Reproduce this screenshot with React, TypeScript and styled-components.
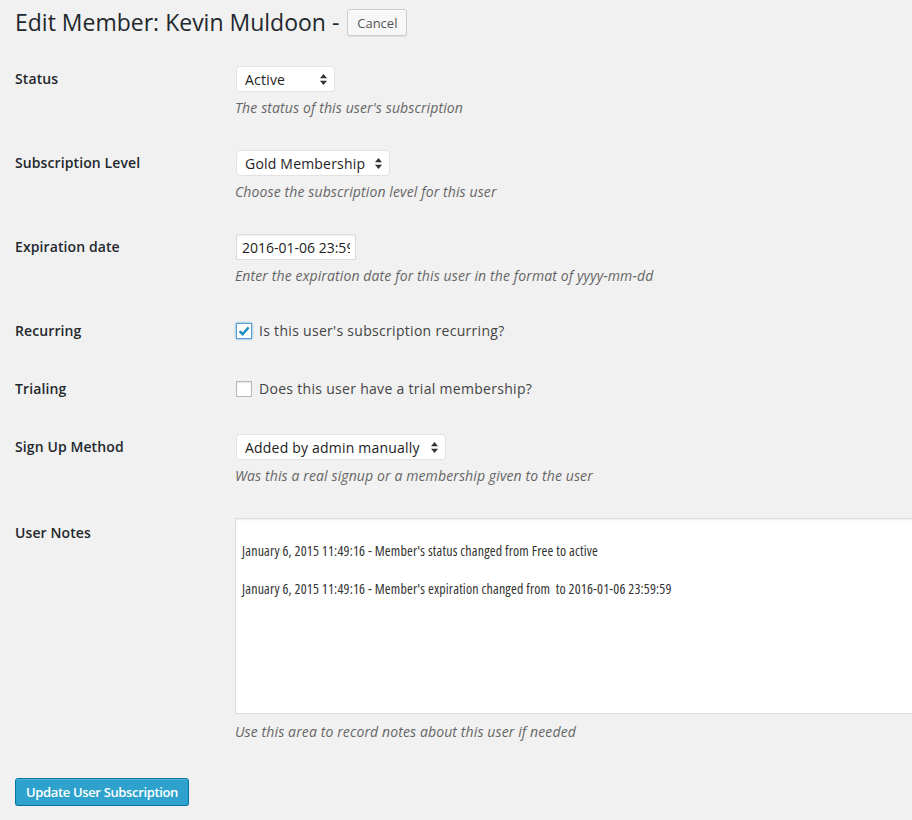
import { ReactNode } from 'react';
import styled, { createGlobalStyle } from 'styled-components';

const GlobalStyle = createGlobalStyle`
    html, body {
        margin: 0;
        padding: 0;
        background: #f1f1f1;
    }
    body {
        font-family: 'Open Sans', 'Noto Sans', sans-serif;
        font-size: 14px;
        color: #444;
        overflow: hidden;
    }
`;

const notes = `
January 6, 2015 11:49:16 - Member's status changed from Free to active

January 6, 2015 11:49:16 - Member's expiration changed from  to 2016-01-06 23:59:59`;

export default function App() {
    return (
        <>
            <GlobalStyle />
            <Page>
                <Header>
                    <Title>Edit Member: Kevin Muldoon -</Title>
                    <CancelButton type="button">Cancel</CancelButton>
                </Header>

                <Form onSubmit={(e) => e.preventDefault()}>
                    <Row label="Status">
                        <SelectBox width={99} value="Active" options={['Active', 'Inactive']} />
                        <Description>The status of this user's subscription</Description>
                    </Row>
                    <Row label="Subscription Level">
                        <SelectBox width={154} value="Gold Membership" options={['Free', 'Gold Membership']} />
                        <Description>Choose the subscription level for this user</Description>
                    </Row>
                    <Row label="Expiration date">
                        <TextInput type="text" defaultValue="2016-01-06 23:59:59" />
                        <Description>Enter the expiration date for this user in the format of yyyy-mm-dd</Description>
                    </Row>
                    <Row label="Recurring" compact>
                        <CheckLabel>
                            <Checkbox checked />
                            Is this user's subscription recurring?
                        </CheckLabel>
                    </Row>
                    <Row label="Trialing" compact>
                        <CheckLabel>
                            <Checkbox checked={false} />
                            Does this user have a trial membership?
                        </CheckLabel>
                    </Row>
                    <Row label="Sign Up Method">
                        <SelectBox
                            width={210}
                            value="Added by admin manually"
                            options={['Added by admin manually', 'Real signup']}
                        />
                        <Description>Was this a real signup or a membership given to the user</Description>
                    </Row>
                    <Row label="User Notes" labelOffset={2}>
                        <Notes defaultValue={notes} />
                        <Description $gap={8}>Use this area to record notes about this user if needed</Description>
                    </Row>

                    <PrimaryButton type="submit">Update User Subscription</PrimaryButton>
                </Form>
            </Page>
        </>
    );
}

function Row({
    label,
    compact,
    labelOffset = 0,
    children,
}: {
    label: string;
    compact?: boolean;
    labelOffset?: number;
    children: ReactNode;
}) {
    return (
        <FieldRow $compact={compact}>
            <FieldLabel $compact={compact} $offset={labelOffset}>
                {label}
            </FieldLabel>
            <FieldBody>{children}</FieldBody>
        </FieldRow>
    );
}

function SelectBox({ width, value, options }: { width: number; value: string; options: string[] }) {
    return (
        <SelectWrap style={{ width }}>
            <NativeSelect defaultValue={value}>
                {options.map((o) => (
                    <option key={o}>{o}</option>
                ))}
            </NativeSelect>
            <Arrows width="7" height="11" viewBox="0 0 7 11">
                <path d="M3.5 0 L7 4.2 L0 4.2 Z" fill="#333" />
                <path d="M3.5 11 L7 6.8 L0 6.8 Z" fill="#333" />
            </Arrows>
        </SelectWrap>
    );
}

function Checkbox({ checked }: { checked: boolean }) {
    return (
        <CheckBoxFace $checked={checked}>
            {checked && (
                <svg width="12" height="12" viewBox="0 0 12 12">
                    <path d="M1.6 6.2 L4.6 9.2 L10.6 2.4" fill="none" stroke="#1e8cbe" strokeWidth="2.4" />
                </svg>
            )}
        </CheckBoxFace>
    );
}

const Page = styled.div`
    padding: 9px 0 0 15px;
`;

const Header = styled.div`
    display: flex;
    align-items: center;
    gap: 8px;
    height: 27px;
`;

const Title = styled.h1`
    margin: 0;
    font-size: 23px;
    font-weight: 400;
    line-height: 27px;
    color: #23282d;
`;

const CancelButton = styled.button`
    height: 27px;
    width: 60px;
    padding: 0;
    font-family: inherit;
    font-size: 13px;
    color: #555;
    background: #f7f7f7;
    border: 1px solid #ccc;
    border-radius: 3px;
    box-shadow: inset 0 1px 0 #fff, 0 1px 0 rgba(0, 0, 0, 0.08);
`;

const Form = styled.form`
    display: flex;
    flex-direction: column;
    margin-top: 14px;
`;

const FieldRow = styled.div<{ $compact?: boolean }>`
    display: grid;
    grid-template-columns: 221px 1fr;
    padding: ${({ $compact }) => ($compact ? '19px 0' : '16px 0')};
`;

const FieldLabel = styled.div<{ $compact?: boolean; $offset: number }>`
    padding-top: ${({ $offset }) => $offset}px;
    font-weight: 600;
    font-size: 14px;
    letter-spacing: 0.1px;
    color: #23282d;
    line-height: ${({ $compact }) => ($compact ? '20px' : '26px')};
`;

const FieldBody = styled.div`
    display: flex;
    flex-direction: column;
    align-items: flex-start;
    min-width: 0;
`;

const Description = styled.p<{ $gap?: number }>`
    margin: ${({ $gap }) => $gap ?? 6}px 0 0 -1px;
    font-size: 14px;
    line-height: 20px;
    font-style: italic;
    letter-spacing: 0.12px;
    color: #666;
`;

const SelectWrap = styled.div`
    position: relative;
    height: 26px;
`;

const NativeSelect = styled.select`
    appearance: none;
    -webkit-appearance: none;
    width: 100%;
    height: 26px;
    margin: 0;
    padding: 0 20px 0 8px;
    font-family: inherit;
    font-size: 14px;
    letter-spacing: 0.2px;
    color: #222;
    background: #fff;
    border: 1px solid #e2e2e2;
    border-radius: 4px;
    outline: none;
`;

const Arrows = styled.svg`
    position: absolute;
    right: 8px;
    top: 8px;
    pointer-events: none;
`;

const TextInput = styled.input`
    box-sizing: border-box;
    width: 120px;
    height: 26px;
    margin: 0;
    padding: 0 5px;
    font-family: inherit;
    font-size: 14px;
    color: #222;
    background: #fff;
    border: 1px solid #ddd;
    box-shadow: inset 0 1px 2px rgba(0, 0, 0, 0.07);
    outline: none;
`;

const CheckLabel = styled.label`
    display: flex;
    align-items: center;
    gap: 7px;
    line-height: 20px;
    font-size: 14px;
    letter-spacing: 0.3px;
    color: #444;
`;

const CheckBoxFace = styled.span<{ $checked: boolean }>`
    box-sizing: border-box;
    display: inline-flex;
    align-items: center;
    justify-content: center;
    width: 16px;
    height: 16px;
    background: #fff;
    border: 1px solid ${({ $checked }) => ($checked ? '#5b9dd9' : '#b4b9be')};
    box-shadow: ${({ $checked }) =>
        $checked ? '0 0 2px rgba(30, 140, 190, 0.8)' : 'inset 0 1px 2px rgba(0, 0, 0, 0.1)'};
`;

const Notes = styled.textarea`
    box-sizing: border-box;
    width: 700px;
    height: 196px;
    margin: 0 0 0 -1px;
    padding: 3px 6px;
    resize: none;
    font-family: 'Open Sans', sans-serif;
    font-size: 14px;
    font-stretch: 75%;
    letter-spacing: 0.17px;
    line-height: 19px;
    color: #333;
    background: #fff;
    border: 1px solid #ddd;
    box-shadow: inset 0 1px 2px rgba(0, 0, 0, 0.07);
    outline: none;
`;

const PrimaryButton = styled.button`
    align-self: flex-start;
    width: 174px;
    height: 28px;
    margin-top: 20px;
    padding: 0;
    font-family: inherit;
    font-size: 13px;
    font-weight: 600;
    letter-spacing: -0.35px;
    color: #fff;
    background: #2ea2cc;
    border: 1px solid #0074a2;
    border-radius: 3px;
    box-shadow: inset 0 1px 0 rgba(120, 200, 230, 0.5), 0 1px 0 rgba(0, 0, 0, 0.15);
`;
